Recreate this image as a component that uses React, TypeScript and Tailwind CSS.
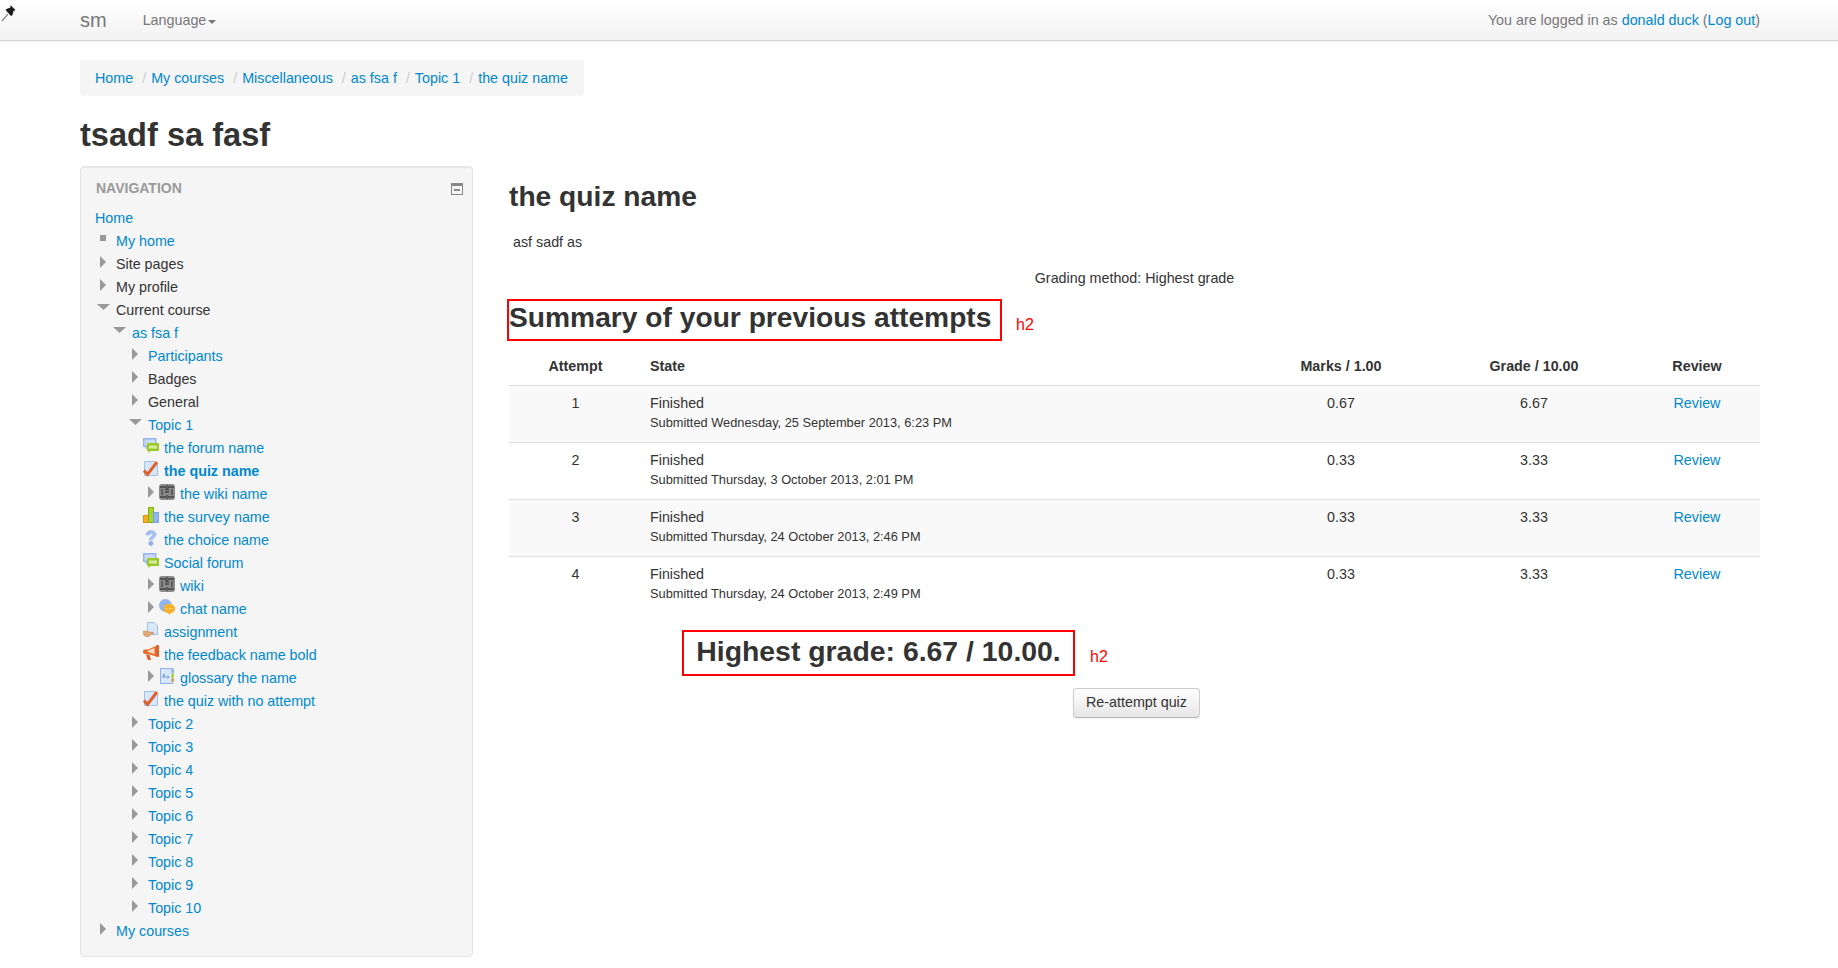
type IconName = 'forum' | 'quiz' | 'wiki' | 'survey' | 'choice' | 'chat' | 'assign' | 'feedback' | 'glossary';

type NavRow = {
  label: string;
  depth: 0 | 1 | 2 | 3;
  marker?: 'square' | 'closed' | 'open';
  icon?: IconName;
  link?: boolean;
  bold?: boolean;
};

const crumbs = ['Home', 'My courses', 'Miscellaneous', 'as fsa f', 'Topic 1', 'the quiz name'];

const navRows: NavRow[] = [
  { label: 'My home', depth: 0, marker: 'square', link: true },
  { label: 'Site pages', depth: 0, marker: 'closed' },
  { label: 'My profile', depth: 0, marker: 'closed' },
  { label: 'Current course', depth: 0, marker: 'open' },
  { label: 'as fsa f', depth: 1, marker: 'open', link: true },
  { label: 'Participants', depth: 2, marker: 'closed', link: true },
  { label: 'Badges', depth: 2, marker: 'closed' },
  { label: 'General', depth: 2, marker: 'closed' },
  { label: 'Topic 1', depth: 2, marker: 'open', link: true },
  { label: 'the forum name', depth: 3, icon: 'forum', link: true },
  { label: 'the quiz name', depth: 3, icon: 'quiz', link: true, bold: true },
  { label: 'the wiki name', depth: 3, marker: 'closed', icon: 'wiki', link: true },
  { label: 'the survey name', depth: 3, icon: 'survey', link: true },
  { label: 'the choice name', depth: 3, icon: 'choice', link: true },
  { label: 'Social forum', depth: 3, icon: 'forum', link: true },
  { label: 'wiki', depth: 3, marker: 'closed', icon: 'wiki', link: true },
  { label: 'chat name', depth: 3, marker: 'closed', icon: 'chat', link: true },
  { label: 'assignment', depth: 3, icon: 'assign', link: true },
  { label: 'the feedback name bold', depth: 3, icon: 'feedback', link: true },
  { label: 'glossary the name', depth: 3, marker: 'closed', icon: 'glossary', link: true },
  { label: 'the quiz with no attempt', depth: 3, icon: 'quiz', link: true },
  ...['Topic 2', 'Topic 3', 'Topic 4', 'Topic 5', 'Topic 6', 'Topic 7', 'Topic 8', 'Topic 9', 'Topic 10'].map(
    (label): NavRow => ({ label, depth: 2, marker: 'closed', link: true }),
  ),
  { label: 'My courses', depth: 0, marker: 'closed', link: true },
];

const depthClass = ['ml-0', 'ml-4', 'ml-8', 'ml-12'];

const attempts = [
  { n: 1, when: 'Wednesday, 25 September 2013, 6:23 PM', marks: '0.67', grade: '6.67' },
  { n: 2, when: 'Thursday, 3 October 2013, 2:01 PM', marks: '0.33', grade: '3.33' },
  { n: 3, when: 'Thursday, 24 October 2013, 2:46 PM', marks: '0.33', grade: '3.33' },
  { n: 4, when: 'Thursday, 24 October 2013, 2:49 PM', marks: '0.33', grade: '3.33' },
];

function ModIcon({ name }: { name: IconName }) {
  return (
    <svg width="16" height="16" viewBox="0 0 16 16" className="block">
      {name === 'forum' && (
        <>
          <path d="M0 0h13.500v9h-8.500l-2.500 2.500v-2.500h-2.500z" fill="#93b4ee" />
          <rect x="1.500" y="1.500" width="10.500" height="6" fill="#c9dbf8" />
          <path d="M4 5h12v8h-8.500l-2 2.500v-2.500h-1.500z" fill="#9bc92a" />
          <rect x="6" y="7.500" width="8" height="3" fill="#d5ea9a" />
        </>
      )}
      {name === 'quiz' && (
        <>
          <path d="M1.500 0.500h10l3 3v11h-13z" fill="#d6e6fb" stroke="#a2bfe8" />
          <path d="M1 9.500l3.500 4l9.500-12.500" fill="none" stroke="#e0602a" strokeWidth="3" />
        </>
      )}
      {name === 'wiki' && (
        <>
          <rect x="0" y="0" width="16" height="16" rx="3" fill="#8a8a8a" />
          <path d="M1 3h6M9 3h6M1 13h6M9 13h6M3 5v6M6 5.500h4M6 8h4M13 5v6M8 1v4M8 11v4" stroke="#444" strokeWidth="1.300" fill="none" />
        </>
      )}
      {name === 'survey' && (
        <>
          <rect x="0.500" y="8.500" width="5" height="7" fill="#f7ae1e" stroke="#e08d12" />
          <rect x="5.500" y="0.500" width="5" height="15" fill="#a9d42b" stroke="#85ad1b" />
          <rect x="10.500" y="5.500" width="5" height="10" fill="#93b6f0" stroke="#7fa2e0" />
        </>
      )}
      {name === 'choice' && (
        <>
          <path
            d="M3 5c0-3 2.500-4.500 5-4.500s5 1.500 5 4c0 3.200-3.500 3-3.500 5.500h-3.200c0-3.600 3.400-3.600 3.400-5.300c0-.8-.8-1.300-1.700-1.300s-1.500.6-1.500 1.600z"
            fill="#a6c3f2"
            stroke="#8fb0ea"
            strokeWidth="0.600"
          />
          <circle cx="7.900" cy="13.500" r="2.400" fill="#8fb0ea" />
        </>
      )}
      {name === 'chat' && (
        <>
          <circle cx="6.500" cy="6.500" r="6.500" fill="#93b4ee" />
          <path d="M10 5c3.500 0 6 1.700 6 4.500s-2.200 4.500-4.500 4.700l-.5 1.800l-2-1.800c-2.500-.2-4.500-2-4.500-4.700s2-4.500 5.500-4.500z" fill="#f7b02c" />
          <path d="M7.500 9.500h1M10 9.500h1M12.500 9.500h1" stroke="#fff3cf" strokeWidth="1.200" />
        </>
      )}
      {name === 'assign' && (
        <>
          <path d="M4.500 0.500h7l3 3v9h-10z" fill="#d9e7fb" stroke="#a2bfe8" />
          <path d="M0 9.500c2-1 4 0 6.500 .5l4 .5c1 .5 0 1.500-1 1.500h-2l-1 2.500h-3c-2.500 0-3.500-2.500-3.500-5z" fill="#dfa977" stroke="#c48a55" strokeWidth="0.600" />
        </>
      )}
      {name === 'feedback' && (
        <>
          <path d="M5 4.500l8-3.500v10.500l-8-2.500h-3.500c-2 0-2-4.500 0-4.500z" fill="#ea6a2c" />
          <path d="M5 5.500l6.500-2.500v6l-6.500-2z" fill="#f4d9c8" />
          <rect x="13" y="0" width="3" height="12" rx="1" fill="#e0602a" />
          <path d="M3 9.500h3.500l1.500 5.500h-3.200z" fill="#e0602a" />
        </>
      )}
      {name === 'glossary' && (
        <>
          <rect x="1.500" y="0.500" width="12" height="15" fill="#d6e6fb" stroke="#8fb0ea" />
          <rect x="12.500" y="1" width="2.500" height="4" fill="#93b6f0" />
          <rect x="12.500" y="6" width="2.500" height="3.500" fill="#a9d42b" />
          <rect x="12.500" y="10.500" width="2.500" height="3" fill="#e08d3a" />
          <path d="M3.500 10l1.500-4l1.500 4M4 8.700h2M9.500 8.500c-1.500-1-2.500 1.500-1 1.500c.7 0 1-.5 1-1.500v1.500" stroke="#6f8fbf" strokeWidth="0.800" fill="none" />
        </>
      )}
    </svg>
  );
}

function Marker({ kind }: { kind: NavRow['marker'] }) {
  if (kind === 'square') return <span className="ml-[5px] mt-[5px] block size-1.5 bg-[#999]" />;
  if (kind === 'open') {
    return (
      <svg width="13" height="6" viewBox="0 0 13 6" className="ml-[2px] mt-[5px] block">
        <path d="M0 0h13l-6.500 6z" fill="#999" />
      </svg>
    );
  }
  if (kind === 'closed') {
    return (
      <svg width="6" height="12" viewBox="0 0 6 12" className="ml-[5px] mt-[3px] block">
        <path d="M0 0l6 6l-6 6z" fill="#999" />
      </svg>
    );
  }
  return null;
}

function NavTreeRow({ row }: { row: NavRow }) {
  const color = row.link ? 'text-[#0088cc]' : 'text-[#333]';
  return (
    <li className={`flex h-[23px] leading-[23px] ${depthClass[row.depth]}`}>
      {row.marker && row.icon ? (
        <>
          <span className="w-4 shrink-0">
            <Marker kind={row.marker} />
          </span>
          <span className="w-[21px] shrink-0 pt-px">
            <ModIcon name={row.icon} />
          </span>
        </>
      ) : row.icon ? (
        <span className="w-[21px] shrink-0 pt-px">
          <ModIcon name={row.icon} />
        </span>
      ) : (
        <span className="w-[21px] shrink-0">
          <Marker kind={row.marker} />
        </span>
      )}
      <span className={`${color} ${row.bold ? 'font-bold' : ''}`}>{row.label}</span>
    </li>
  );
}

function Navbar() {
  return (
    <header className="relative h-[41px] border-b border-[#d4d4d4] bg-gradient-to-b from-white to-[#f2f2f2] shadow-[0_1px_4px_rgba(0,0,0,0.065)]">
      <svg width="16" height="18" viewBox="0 0 16 18" className="absolute left-px top-1">
        <path d="M1 17l6-7" stroke="#888" strokeWidth="1.200" />
        <path d="M9.500 1l5 5l-2 1l-1 4l-1.500 1l-5.500-6l1-1l4-1.500z" fill="#1c1c1c" />
      </svg>
      <div className="ml-20 mr-[78px] flex h-10 items-center pt-0.5 text-[#777]">
        <span className="-mt-0.5 text-xl font-light">sm</span>
        <span className="ml-9 flex items-center">
          Language
          <span className="ml-0.5 mt-px border-x-4 border-t-4 border-x-transparent border-t-[#777]" />
        </span>
        <span className="ml-auto">
          You are logged in as <span className="text-[#0088cc]">donald duck</span> (
          <span className="text-[#0088cc]">Log out</span>)
        </span>
      </div>
    </header>
  );
}

function Breadcrumb() {
  return (
    <nav className="mt-[19px] flex h-9 w-fit items-center rounded bg-[#f5f5f5] pl-[15px] pr-4 pt-0.5">
      {crumbs.map((crumb, i) => (
        <span key={crumb} className="flex">
          {i > 0 && <span className="pl-[9px] pr-[5px] text-[#ccc]">/</span>}
          <span className="text-[#0088cc]">{crumb}</span>
        </span>
      ))}
    </nav>
  );
}

function Sidebar() {
  return (
    <aside className="h-[791px] w-[393px] shrink-0 rounded border border-[#e3e3e3] bg-[#f5f5f5] pl-3.5 pt-[9px] shadow-[inset_0_1px_1px_rgba(0,0,0,0.05)]">
      <div className="flex h-[31px] items-start justify-between pr-[9px]">
        <span className="pl-px pt-0.5 text-sm font-bold uppercase leading-5 text-[#999]">Navigation</span>
        <svg width="12" height="12" viewBox="0 0 12 12" className="mt-[7px]">
          <rect x="0.500" y="0.500" width="11" height="11" fill="#f5f5f5" stroke="#888" />
          <rect x="1" y="1" width="10" height="2" fill="#888" />
          <rect x="3" y="6" width="6" height="2" fill="#888" />
        </svg>
      </div>
      <div className="h-[23px] leading-[23px] text-[#0088cc]">Home</div>
      <ul>
        {navRows.map((row, i) => (
          <NavTreeRow key={i} row={row} />
        ))}
      </ul>
    </aside>
  );
}

function AttemptsTable() {
  return (
    <table className="mt-[7px] w-full table-fixed border-collapse">
      <colgroup>
        <col className="w-[133px]" />
        <col />
        <col className="w-[186px]" />
        <col className="w-[200px]" />
        <col className="w-[126px]" />
      </colgroup>
      <thead>
        <tr className="h-[37px] border-b border-[#ddd] font-bold">
          <th className="font-bold">Attempt</th>
          <th className="px-2 text-left font-bold">State</th>
          <th className="font-bold">Marks / 1.00</th>
          <th className="font-bold">Grade / 10.00</th>
          <th className="font-bold">Review</th>
        </tr>
      </thead>
      <tbody>
        {attempts.map((a) => (
          <tr key={a.n} className="h-[57px] border-b border-[#ddd] align-top last:border-b-0 odd:bg-[#f9f9f9]">
            <td className="pt-[7px] text-center leading-5">{a.n}</td>
            <td className="px-2 pt-[7px] leading-5">
              <div>Finished</div>
              <div className="text-[12.8px] leading-5">Submitted {a.when}</div>
            </td>
            <td className="pt-[7px] text-center leading-5">{a.marks}</td>
            <td className="pt-[7px] text-center leading-5">{a.grade}</td>
            <td className="pt-[7px] text-center leading-5 text-[#0088cc]">Review</td>
          </tr>
        ))}
      </tbody>
    </table>
  );
}

function MainPanel() {
  return (
    <main className="min-w-0 flex-1">
      <h2 className="pt-3 text-[28.2px] font-bold leading-9">the quiz name</h2>
      <p className="ml-1 mt-[18px] leading-5">asf sadf as</p>
      <p className="mt-4 text-center leading-5">Grading method: Highest grade</p>
      <div className="-ml-0.5 mt-[11px] flex items-center">
        <h3 className="flex h-[42px] w-[495px] items-center border-2 border-[#ff0000] pb-1.5 text-[28.2px] font-bold">
          Summary of your previous attempts
        </h3>
        <span className="ml-3.5 mt-2.5 text-base text-[#ff0000]">h2</span>
      </div>
      <AttemptsTable />
      <div className="ml-[173px] mt-[17px] flex items-center">
        <h3 className="flex h-[46px] w-[393px] items-center justify-center border-2 border-[#ff0000] pb-[3px] text-[28.4px] font-bold">
          Highest grade: 6.67 / 10.00.
        </h3>
        <span className="ml-[15px] mt-2 text-base text-[#ff0000]">h2</span>
      </div>
      <div className="mt-3 flex justify-center">
        <button className="ml-1 h-[30px] rounded border border-[#ccc] border-b-[#b3b3b3] bg-gradient-to-b from-white to-[#e6e6e6] px-3 text-[#333] shadow-[0_1px_2px_rgba(0,0,0,0.05)]">
          Re-attempt quiz
        </button>
      </div>
    </main>
  );
}

export default function App() {
  return (
    <div className="h-[968px] overflow-hidden bg-white font-['Liberation_Sans',Arial,sans-serif] text-[14.3px] text-[#333]">
      <Navbar />
      <div className="ml-20 mr-[78px]">
        <Breadcrumb />
        <h1 className="mt-[19px] pb-px text-[32.6px] font-bold leading-10">tsadf sa fasf</h1>
        <div className="mt-2.5 flex gap-9">
          <Sidebar />
          <MainPanel />
        </div>
      </div>
    </div>
  );
}
